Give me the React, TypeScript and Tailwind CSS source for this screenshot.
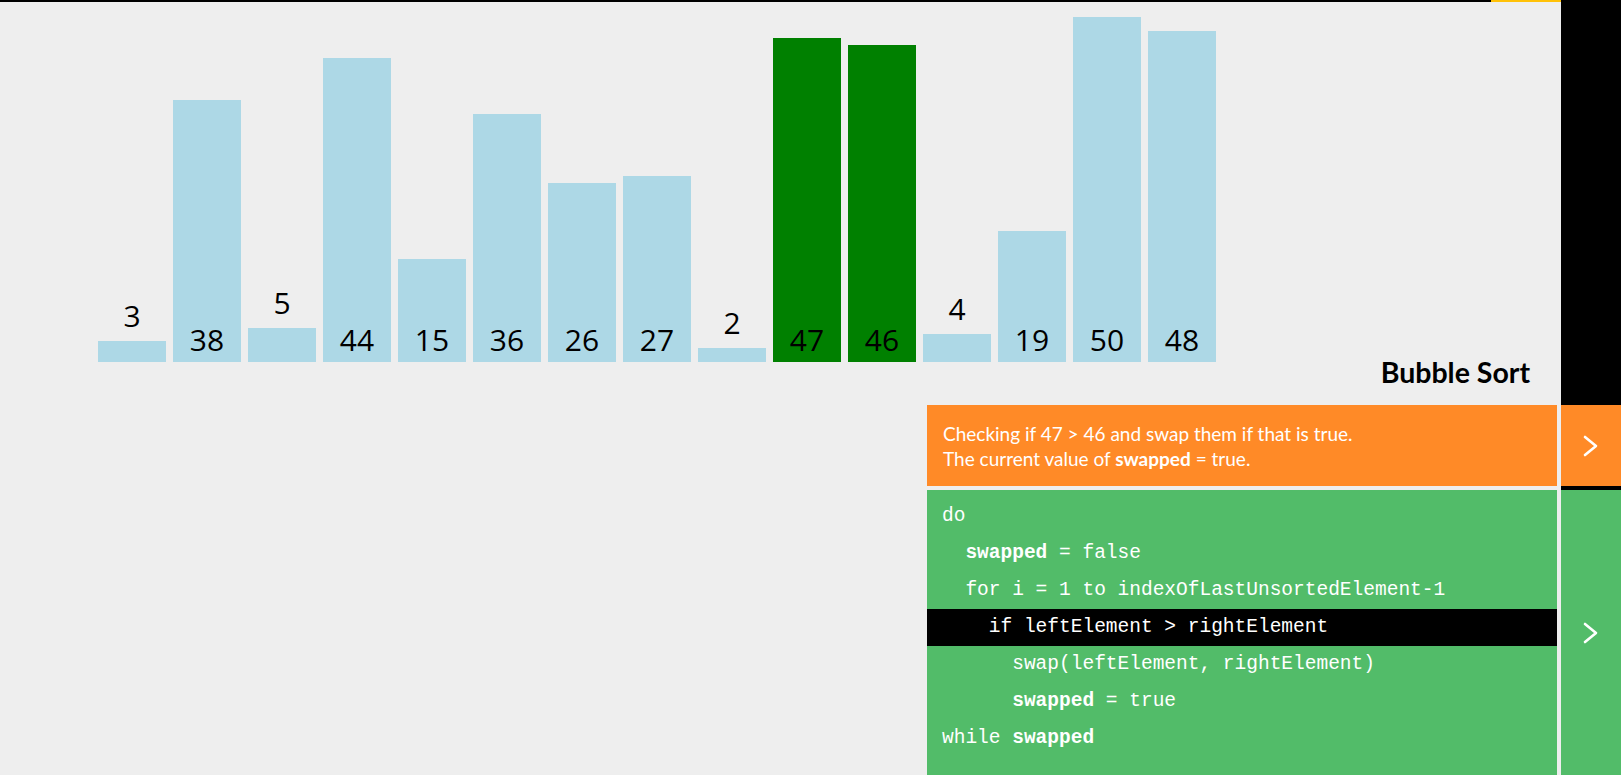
import { ReactNode } from 'react';

const BARS = [
  { v: 3 },
  { v: 38 },
  { v: 5 },
  { v: 44 },
  { v: 15 },
  { v: 36 },
  { v: 26 },
  { v: 27 },
  { v: 2 },
  { v: 47, active: true },
  { v: 46, active: true },
  { v: 4 },
  { v: 19 },
  { v: 50 },
  { v: 48 },
];

const SCALE = 6.9;

const Chevron = () => (
  <svg width="16" height="22" viewBox="0 0 16 22" fill="none">
    <polyline
      points="2,2 13,11 2,20"
      stroke="white"
      strokeWidth="2.6"
      strokeLinecap="round"
      strokeLinejoin="round"
    />
  </svg>
);

const Bar = ({ v, active }: { v: number; active?: boolean }) => {
  const h = v * SCALE;
  const color = active ? 'bg-[#008000]' : 'bg-[#add8e6]';
  const label = (
    <span className="text-[30px] leading-none text-black">{v}</span>
  );

  // short bars get the value written above them
  if (h < 40) {
    return (
      <div className="flex flex-col items-center justify-end w-[68px]">
        <div className="mb-[8px]">{label}</div>
        <div className={`w-full ${color}`} style={{ height: h }} />
      </div>
    );
  }

  return (
    <div className="flex flex-col justify-end w-[68px]">
      <div
        className={`w-full flex items-end justify-center pb-[7px] ${color}`}
        style={{ height: h }}
      >
        {label}
      </div>
    </div>
  );
};

const CodeLine = ({
  indent,
  active,
  children,
}: {
  indent: number;
  active?: boolean;
  children: ReactNode;
}) => (
  <div
    className={`h-[37px] flex items-center pl-[15px] ${
      active ? 'bg-black' : ''
    }`}
  >
    <span className="whitespace-pre">
      {'  '.repeat(indent)}
      {children}
    </span>
  </div>
);

export default function App() {
  return (
    <div className="w-[1621px] h-[775px] bg-[#eeeeee] flex flex-col overflow-hidden font-['Open_Sans',sans-serif]">
      {/* 상단: 막대 + 제목 */}
      <div className="h-[405px] flex">
        <div className="flex-1 flex flex-col">
          <div className="h-[2px] flex">
            <div className="flex-1 bg-black" />
            <div className="w-[70px] bg-[#ffc107]" />
          </div>
          <div className="h-[360px] flex items-end gap-[7px] pl-[98px]">
            {BARS.map((b, i) => (
              <Bar key={i} v={b.v} active={b.active} />
            ))}
          </div>
          <div className="pr-[31px] text-right font-['Lato',sans-serif] font-bold text-[28.5px] leading-[20px] text-black">
            Bubble Sort
          </div>
        </div>
        <div className="w-[60px] bg-black" />
      </div>

      {/* 하단: 상태 + 코드 */}
      <div className="flex-1 flex">
        <div className="w-[927px]" />
        <div className="w-[630px] flex flex-col gap-[4px]">
          <div className="h-[81px] bg-[#ff8a27] flex items-center px-4 font-['Lato',sans-serif] text-[19px] leading-[25px] text-white">
            <div>
              Checking if 47 &gt; 46 and swap them if that is true.
              <br />
              The current value of <b>swapped</b> = true.
            </div>
          </div>
          <div className="flex-1 bg-[#52bc69] pt-[8px] font-['Liberation_Mono',monospace] text-[19.5px] text-white">
            <CodeLine indent={0}>do</CodeLine>
            <CodeLine indent={1}>
              <b>swapped</b> = false
            </CodeLine>
            <CodeLine indent={1}>for i = 1 to indexOfLastUnsortedElement-1</CodeLine>
            <CodeLine indent={2} active>
              if leftElement &gt; rightElement
            </CodeLine>
            <CodeLine indent={3}>swap(leftElement, rightElement)</CodeLine>
            <CodeLine indent={3}>
              <b>swapped</b> = true
            </CodeLine>
            <CodeLine indent={0}>
              while <b>swapped</b>
            </CodeLine>
          </div>
        </div>
        <div className="w-[4px]" />
        <div className="w-[60px] bg-black flex flex-col gap-[4px]">
          <button className="h-[81px] bg-[#ff8a27] flex items-center justify-center">
            <Chevron />
          </button>
          <button className="flex-1 bg-[#52bc69] flex items-center justify-center">
            <Chevron />
          </button>
        </div>
      </div>
    </div>
  );
}
